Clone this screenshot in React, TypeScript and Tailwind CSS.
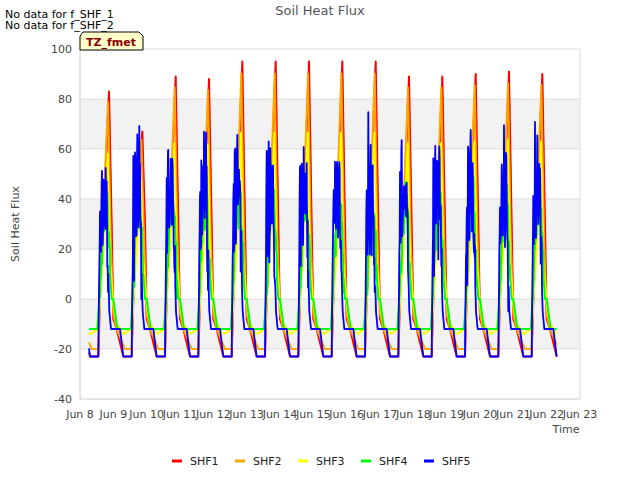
import React from "react";

const X0 = 80, X1 = 580, Y0 = 49, Y1 = 399;
const xs = (d: number) => X0 + (d / 15) * (X1 - X0);
const ys = (v: number) => Y0 + ((100 - v) / 140) * (Y1 - Y0);

const redPeaks = [83, 67, 89, 88, 95, 95, 95, 95, 95, 89, 89, 90, 91, 90];
function rnd(i: number) {
  const s = Math.sin(i * 12.9898) * 43758.5453;
  return s - Math.floor(s);
}
function interp(kp: number[][], p: number) {
  for (let i = 0; i < kp.length - 1; i++) {
    const [a, va] = kp[i], [b, vb] = kp[i + 1];
    if (p >= a && p <= b) return va + ((vb - va) * (p - a)) / (b - a);
  }
  return kp[kp.length - 1][1];
}
function series(k: number) {
  const pts: string[] = [];
  for (let t = 0.27; t <= 14.3; t += 0.01) {
    const day = Math.floor(t), p = t - day;
    const pk = redPeaks[Math.min(day, 13)];
    const i = Math.round(t * 100);
    let kp: number[][];
    if (k === 0) kp = [[0, -8], [0.1, -12], [0.3, -23], [0.55, -23], [0.6, 0], [0.7, 30], [0.87, pk], [0.95, 30], [1, -8]];
    else if (k === 1) kp = [[0, -6], [0.1, -12], [0.35, -20], [0.55, -20], [0.6, 0], [0.7, 35], [0.84, pk * 0.95], [0.92, 25], [1, -6]];
    else if (k === 2) kp = [[0, -2], [0.1, -10], [0.3, -14], [0.55, -12], [0.6, 0], [0.7, 20], [0.83, pk * 0.7], [0.9, 15], [1, -2]];
    else if (k === 3) kp = [[0, 0], [0.12, -12], [0.52, -12], [0.58, 0], [0.7, 35], [0.8, 40], [0.9, 10], [0.95, 0], [1, 0]];
    else kp = [[0, -12], [0.2, -12], [0.3, -23], [0.55, -23], [0.6, 45], [0.62, 20], [0.65, 60], [0.68, 25], [0.72, 55], [0.75, 30], [0.78, 55], [0.82, 25], [0.88, -5], [0.93, -12], [1, -12]];
    let v = interp(kp, p);
    if (k === 4 && p > 0.58 && p < 0.85) v += (rnd(i) - 0.5) * 30;
    if (k === 3 && p > 0.6 && p < 0.9) v += (rnd(i + 7) - 0.5) * 20;
    pts.push(`${xs(t).toFixed(1)},${ys(Math.max(-23, v)).toFixed(1)}`);
  }
  return pts.join(" ");
}
const colors = ["#ff0000", "#ffa500", "#ffff00", "#00ff00", "#0000ff"];
const names = ["SHF1", "SHF2", "SHF3", "SHF4", "SHF5"];
const F = "'DejaVu Sans', sans-serif";

export default function App() {
  return (
    <div className="w-[640px] h-[480px] bg-white relative overflow-hidden">
      <svg width="640" height="480" style={{ fontFamily: F }} className="block">
        <text x="5" y="18" fontSize="11" fill="#000">No data for f_SHF_1</text>
        <text x="5" y="29" fontSize="11" fill="#000">No data for f_SHF_2</text>
        <text x="320" y="15" fontSize="13" fill="#555" textAnchor="middle">Soil Heat Flux</text>
        {[[60, 80], [20, 40], [-20, 0]].map(([a, b]) => (
          <rect key={a} x={X0} y={ys(b)} width={X1 - X0} height={ys(a) - ys(b)} fill="#f2f2f2" />
        ))}
        {[100, 80, 60, 40, 20, 0, -20].map((v) => (
          <line key={v} x1={X0} x2={X1} y1={ys(v)} y2={ys(v)} stroke="#dddddd" />
        ))}
        <line x1={X1} x2={X1} y1={Y0} y2={Y1} stroke="#dddddd" />
        <line x1={X0} x2={X0} y1={Y0} y2={Y1} stroke="#cccccc" />
        <line x1={X0} x2={X1} y1={Y1} y2={Y1} stroke="#cccccc" />
        {[100, 80, 60, 40, 20, 0, -20, -40].map((v) => (
          <text key={v} x={72} y={ys(v) + 4} fontSize="11" fill="#444" textAnchor="end">{v}</text>
        ))}
        {Array.from({ length: 16 }, (_, d) => (
          <text key={d} x={xs(d)} y={418} fontSize="11" fill="#444" textAnchor="middle">Jun {8 + d}</text>
        ))}
        <text x="566" y="433" fontSize="11" fill="#444" textAnchor="middle">Time</text>
        <text x="19" y="224" fontSize="11" fill="#444" textAnchor="middle" transform="rotate(-90 19 224)">Soil Heat Flux</text>
        {colors.map((c, k) => (
          <polyline key={k} points={series(k)} fill="none" stroke={c} strokeWidth={k === 4 ? 1.8 : 2} strokeLinejoin="round" />
        ))}
        <path d="M83 32 L139 32 L143 36 L143 50 L80 50 L80 36 Z" fill="#ffffcc" stroke="#000" strokeWidth="1" />
        <text x="111" y="46" fontSize="11" fontWeight="bold" fill="#8b0000" textAnchor="middle">TZ_fmet</text>
        {names.map((n, k) => {
          const x = 172 + k * 63;
          return (
            <g key={n}>
              <line x1={x} x2={x + 10} y1={461} y2={461} stroke={colors[k]} strokeWidth="3" />
              <text x={x + 18} y={465} fontSize="11" fill="#222">{n}</text>
            </g>
          );
        })}
      </svg>
    </div>
  );
}
